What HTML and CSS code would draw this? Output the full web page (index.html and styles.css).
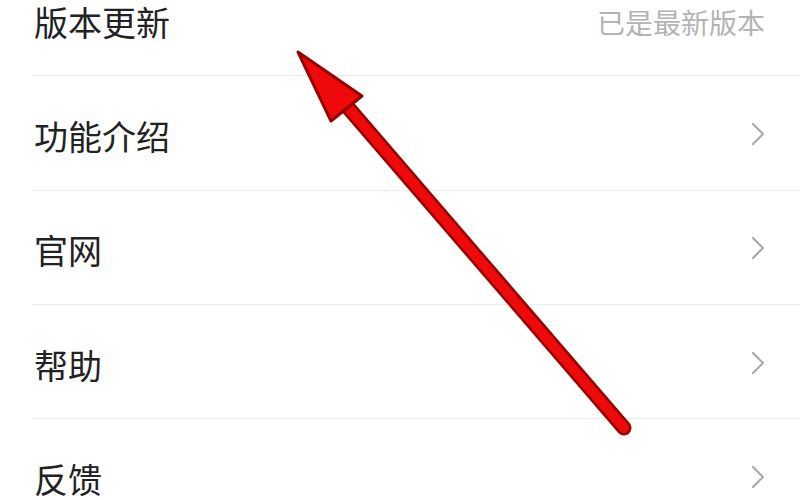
FILE: index.html
```html
<!DOCTYPE html>
<html lang="zh-CN">
<head>
<meta charset="utf-8">
<link rel="stylesheet" href="styles.css">
</head>
<body>
<div class="screen">
  <ul class="list">
    <li class="row first"><span class="label">版本更新</span><span class="value">已是最新版本</span></li>
    <li class="row"><span class="label">功能介绍</span><svg class="chev" viewBox="0 0 14 24"><polyline points="2,2 12,12 2,22"/></svg></li>
    <li class="row"><span class="label">官网</span><svg class="chev" viewBox="0 0 14 24"><polyline points="2,2 12,12 2,22"/></svg></li>
    <li class="row"><span class="label">帮助</span><svg class="chev" viewBox="0 0 14 24"><polyline points="2,2 12,12 2,22"/></svg></li>
    <li class="row"><span class="label">反馈</span><svg class="chev" viewBox="0 0 14 24"><polyline points="2,2 12,12 2,22"/></svg></li>
  </ul>
  <svg class="arrow" viewBox="0 0 800 500" width="800" height="500">
    <line x1="345" y1="104" x2="624" y2="428" stroke="#9a0000" stroke-width="15" stroke-linecap="round"/>
    <line x1="345" y1="104" x2="624" y2="428" stroke="#ee0a0a" stroke-width="10" stroke-linecap="round"/>
    <polygon points="298,52 362,96 331,121" fill="#ee0a0a" stroke="#9a0000" stroke-width="3" stroke-linejoin="round"/>
  </svg>
</div>
</body>
</html>
```
FILE: styles.css
```css
html, body {
  margin: 0;
  padding: 0;
  background: #ffffff;
}
.screen {
  position: relative;
  width: 800px;
  height: 500px;
  overflow: hidden;
  background: #ffffff;
  font-family: "Noto Sans CJK SC", "Noto Sans", sans-serif;
}
.list {
  list-style: none;
  margin: -38px 0 0 0;
  padding: 0 0 0 32px;
}
.row {
  display: flex;
  align-items: center;
  justify-content: space-between;
  box-sizing: border-box;
  height: 114.3px;
  padding: 6px 35px 0 2px;
  border-bottom: 1.5px solid #ededed;
}
.label {
  font-size: 34px;
  color: #222222;
  line-height: 1;
}
.value {
  font-size: 28px;
  color: #b3b3b3;
  line-height: 1;
}
.chev {
  width: 14px;
  height: 24px;
  margin-top: -4px;
}
.chev polyline {
  fill: none;
  stroke: #aaaaaa;
  stroke-width: 2.2;
  stroke-linecap: round;
  stroke-linejoin: round;
}
.arrow {
  position: absolute;
  top: 0;
  left: 0;
}
```
